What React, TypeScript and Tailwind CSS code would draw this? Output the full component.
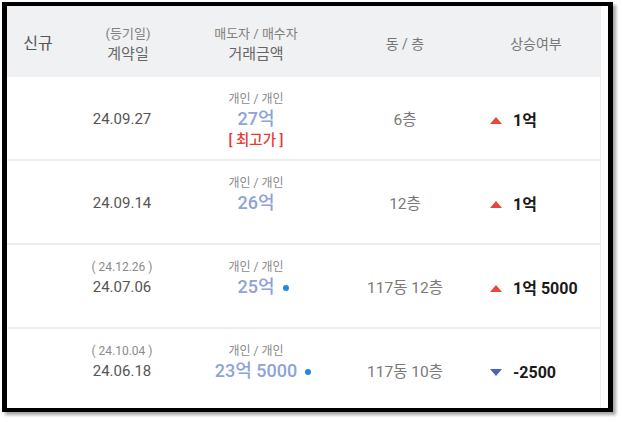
import React from "react";

const font = { fontFamily: "Roboto, 'Noto Sans CJK KR', 'Noto Sans', sans-serif" };

type Row = {
  reg?: string;
  date: string;
  price: string;
  dot?: boolean;
  best?: boolean;
  floor: string;
  up: boolean;
  diff: string;
};

const rows: Row[] = [
  { date: "24.09.27", price: "27억", best: true, floor: "6층", up: true, diff: "1억" },
  { date: "24.09.14", price: "26억", floor: "12층", up: true, diff: "1억" },
  { reg: "( 24.12.26 )", date: "24.07.06", price: "25억", dot: true, floor: "117동 12층", up: true, diff: "1억 5000" },
  { reg: "( 24.10.04 )", date: "24.06.18", price: "23억 5000", dot: true, floor: "117동 10층", up: false, diff: "-2500" },
];

function Tri({ up }: { up: boolean }) {
  return up ? (
    <svg width="12" height="7" viewBox="0 0 12 7">
      <polygon points="6,0 12,7 0,7" fill="#e9463b" />
    </svg>
  ) : (
    <svg width="12" height="7" viewBox="0 0 12 7">
      <polygon points="0,0 12,0 6,7" fill="#4b5fd0" />
    </svg>
  );
}

export default function App() {
  return (
    <div className="w-[622px] h-[422px] bg-white pt-[2px] pl-[2px]" style={font}>
      <div className="w-[611px] h-[410px] border-x-[5px] border-y-[4px] border-black shadow-[3px_3px_3px_rgba(0,0,0,0.35)] flex overflow-hidden bg-white">
        <div className="w-[593px] flex flex-col">
          {/* header */}
          <div className="h-[71px] shrink-0 bg-[#f0f1f3] grid grid-cols-[62px_118px_138px_160px_115px] items-center">
            <div className="text-center text-[16px] text-[#555] pt-[5px]">신규</div>
            <div className="flex flex-col items-center pt-[5px]">
              <span className="text-[13px] leading-[19px] text-[#808080]">(등기일)</span>
              <span className="text-[15px] leading-[22px] text-[#666]">계약일</span>
            </div>
            <div className="flex flex-col items-center pt-[5px]">
              <span className="text-[13px] leading-[19px] text-[#808080]">매도자 / 매수자</span>
              <span className="text-[15px] leading-[22px] text-[#666]">거래금액</span>
            </div>
            <div className="text-center text-[14px] text-[#777] pt-[5px]">동 / 층</div>
            <div className="text-center text-[14px] text-[#777] pr-[13px] pt-[5px]">상승여부</div>
          </div>
          {rows.map((r, i) => (
            <div
              key={i}
              className="h-[84px] shrink-0 border-b-2 border-[#ebedef] grid grid-cols-[62px_118px_138px_160px_115px] items-center pt-[5px]"
            >
              <div />
              <div className="flex flex-col items-center pr-[12px]">
                <span className="h-[18px] leading-[18px] text-[12px] text-[#8a8a8a]">{r.reg ?? ""}</span>
                <span className="h-[22px] leading-[22px] text-[15px] text-[#555]">{r.date}</span>
                <span className="h-[22px]" />
              </div>
              <div className="flex flex-col items-center">
                <span className="h-[18px] leading-[18px] text-[12px] text-[#8a8a8a]">개인 / 개인</span>
                <span className="relative h-[22px] leading-[22px] text-[18px] font-medium text-[#8da3d9]">
                  {r.price}
                  {r.dot && (
                    <span className="absolute left-full top-[9px] ml-[8px] w-[6px] h-[6px] rounded-full bg-[#1f87e6]" />
                  )}
                </span>
                <span className="h-[22px] leading-[22px] text-[14.5px] font-medium text-[#e53b35]">
                  {r.best ? "[ 최고가 ]" : ""}
                </span>
              </div>
              <div className="text-center text-[15.5px] text-[#7a7a7a]">{r.floor}</div>
              <div className="flex items-center pl-[5px] gap-[11px]">
                <Tri up={r.up} />
                <span className="text-[16px] font-bold text-[#1a1a1a]">{r.diff}</span>
              </div>
            </div>
          ))}
        </div>
        <div className="flex-1 border-l border-[#eeeeee] bg-white" />
      </div>
    </div>
  );
}
